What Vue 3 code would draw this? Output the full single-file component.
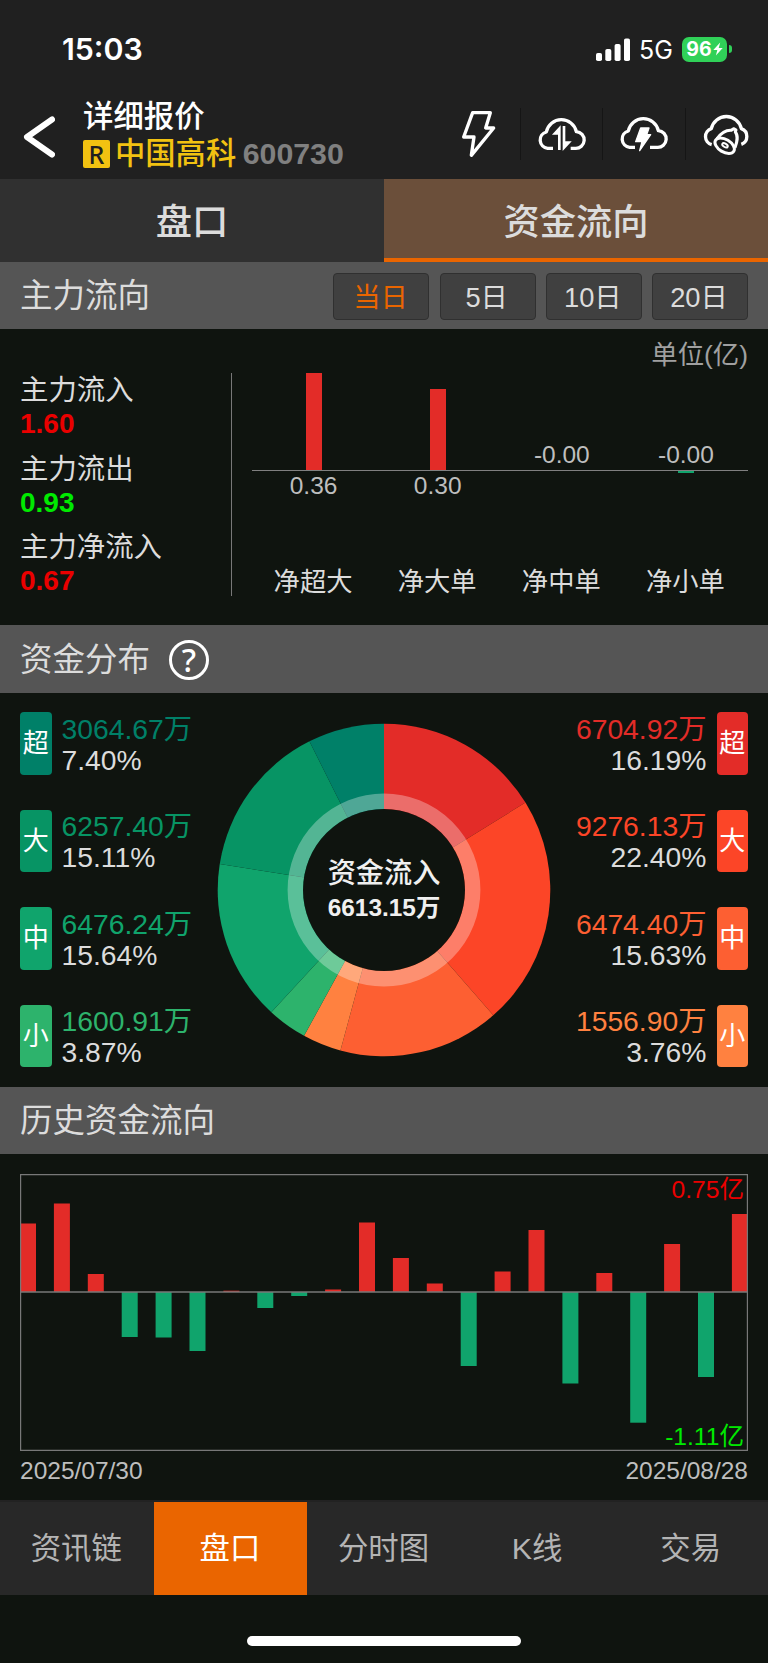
<!-- App.vue -->
<template>
  <div class="page">
    <div class="status-bar">
      <span class="clock">15:03</span>
      <div class="status-right">
        <svg class="signal" viewBox="0 0 34 23">
          <rect x="0" y="15" width="6" height="8" rx="1.8" />
          <rect x="9.3" y="11" width="6" height="12" rx="1.8" />
          <rect x="18.6" y="6" width="6" height="17" rx="1.8" />
          <rect x="28" y="0.5" width="6" height="22.5" rx="1.8" />
        </svg>
        <span class="network">5G</span>
        <div class="battery">
          <span>96</span>
          <svg class="charge" viewBox="0 0 10 14">
            <path d="M7.2 0.4 0.3 7.9H4.3L2.9 13.6 9.7 6H5.7Z" />
          </svg>
        </div>
        <span class="battery-cap"></span>
      </div>
    </div>

    <header class="header">
      <button class="back-btn">
        <svg viewBox="0 0 32 44">
          <path d="M29 4.5 4 22 29 39.5" />
        </svg>
      </button>
      <div class="stock">
        <div class="stock-title">详细报价</div>
        <div class="stock-line">
          <span class="stock-flag">R</span>
          <span class="stock-name">中国高科</span>
          <span class="stock-code">600730</span>
        </div>
      </div>
      <div class="actions">
        <button class="action">
          <svg viewBox="0 0 248 156">
            <path d="M104 14H157L143 60H167L100 142 108 87H77Z" />
          </svg>
        </button>
        <button class="action">
          <svg viewBox="0 0 248 156">
            <path d="M96 121H80A25 25 0 0 1 76 72A46 46 0 0 1 166 71A25 25 0 0 1 163 121H149" />
            <path class="thin" d="M115 126V62L102 76H114M129 54V119L143 104H131" />
          </svg>
        </button>
        <button class="action">
          <svg viewBox="0 0 248 156">
            <path d="M96 118H80A25 25 0 0 1 76 69A46 46 0 0 1 166 68A25 25 0 0 1 163 118H141" />
            <path class="solid" d="M113 60H138L131 80H143L110 128 117 101H98Z" />
          </svg>
        </button>
        <button class="action">
          <svg viewBox="0 0 248 156">
            <path d="M77 110A25 25 0 0 1 76 62A46 46 0 0 1 166 62A25 25 0 0 1 166 109" />
            <ellipse class="bell" cx="116" cy="113" rx="32" ry="19" transform="rotate(31 116 113)" />
            <path class="bell" d="M93 92C102 80 116 66 135 67L144 62 150 66 148 72C159 86 152 104 147 119" />
            <ellipse class="clapper" cx="117" cy="112" rx="9" ry="5" transform="rotate(31 117 112)" />
          </svg>
        </button>
      </div>
    </header>

    <div class="tabs">
      <button v-for="tab in tabs" :key="tab" class="tab" :class="{ active: tab === activeTab }"
        @click="activeTab = tab">{{ tab }}</button>
    </div>

    <div class="section-bar">
      <h3>主力流向</h3>
      <div class="periods">
        <button v-for="p in periods" :key="p" class="period" :class="{ active: p === activePeriod }"
          @click="activePeriod = p">{{ p }}</button>
      </div>
    </div>

    <section class="main-flow">
      <div class="totals">
        <div v-for="item in totals" :key="item.label" class="total">
          <div class="total-label">{{ item.label }}</div>
          <div class="total-value" :class="item.tone">{{ item.value }}</div>
        </div>
      </div>
      <div class="net">
        <div class="unit">单位(亿)</div>
        <div class="net-chart">
          <div v-for="item in netOrders" :key="item.label" class="net-col">
            <div class="net-top">
              <span v-if="item.height <= 0" class="net-value">{{ item.value }}</span>
              <i v-else class="net-bar" :style="{ height: item.height + 'px' }"></i>
            </div>
            <div class="net-bottom">
              <span v-if="item.height > 0" class="net-value">{{ item.value }}</span>
              <i v-else class="net-bar down" :style="{ height: -item.height + 'px' }"></i>
            </div>
            <div class="net-label">{{ item.label }}</div>
          </div>
        </div>
      </div>
    </section>

    <div class="section-bar">
      <h3>资金分布</h3>
      <span class="help">?</span>
    </div>

    <section class="distribution">
      <ul class="legend">
        <li v-for="item in outflow" :key="item.tag">
          <span class="tag" :style="{ background: item.color }">{{ item.tag }}</span>
          <div class="legend-text">
            <div :style="{ color: item.color }">{{ item.amount }}万</div>
            <div class="percent">{{ item.percent.toFixed(2) }}%</div>
          </div>
        </li>
      </ul>
      <svg class="donut" viewBox="-167 -167 334 334">
        <path v-for="s in slices" :key="s.d" :d="s.d" :fill="s.color" />
        <circle class="halo" r="88.7" />
        <circle class="hole" r="81" />
        <text class="donut-title" y="-7">资金流入</text>
        <text class="donut-value" y="26">6613.15万</text>
      </svg>
      <ul class="legend right">
        <li v-for="item in inflow" :key="item.tag">
          <span class="tag" :style="{ background: item.color }">{{ item.tag }}</span>
          <div class="legend-text">
            <div :style="{ color: item.color }">{{ item.amount }}万</div>
            <div class="percent">{{ item.percent.toFixed(2) }}%</div>
          </div>
        </li>
      </ul>
    </section>

    <div class="section-bar">
      <h3>历史资金流向</h3>
    </div>

    <section class="history">
      <svg class="history-chart" viewBox="0 0 728 277">
        <rect v-for="(h, i) in history" :key="i" :x="i * 33.9" :y="h > 0 ? 118 - h : 118" width="16"
          :height="Math.abs(h)" :fill="h > 0 ? '#e32c28' : '#10a46c'" />
        <path class="frame" d="M0.5 0.5H727.5V276.5H0.5ZM0 118H728" />
        <text class="max" x="724" y="24">0.75亿</text>
        <text class="min" x="724" y="271">-1.11亿</text>
      </svg>
      <div class="dates">
        <span>2025/07/30</span>
        <span>2025/08/28</span>
      </div>
    </section>

    <nav class="bottom-nav">
      <button v-for="item in navItems" :key="item" class="nav-item" :class="{ active: item === activeNav }"
        @click="activeNav = item">{{ item }}</button>
    </nav>
    <div class="home-area"><span class="home-indicator"></span></div>
  </div>
</template>

<script setup>
import { ref, computed } from 'vue'

const tabs = ['盘口', '资金流向']
const activeTab = ref('资金流向')

const periods = ['当日', '5日', '10日', '20日']
const activePeriod = ref('当日')

const navItems = ['资讯链', '盘口', '分时图', 'K线', '交易']
const activeNav = ref('盘口')

const totals = [
  { label: '主力流入', value: '1.60', tone: 'up' },
  { label: '主力流出', value: '0.93', tone: 'down' },
  { label: '主力净流入', value: '0.67', tone: 'up' },
]

const netOrders = [
  { label: '净超大', value: '0.36', height: 97 },
  { label: '净大单', value: '0.30', height: 81 },
  { label: '净中单', value: '-0.00', height: 0 },
  { label: '净小单', value: '-0.00', height: -1.5 },
]

const outflow = [
  { tag: '超', amount: '3064.67', percent: 7.4, color: '#008068' },
  { tag: '大', amount: '6257.40', percent: 15.11, color: '#079464' },
  { tag: '中', amount: '6476.24', percent: 15.64, color: '#10a46c' },
  { tag: '小', amount: '1600.91', percent: 3.87, color: '#2db36c' },
]

const inflow = [
  { tag: '超', amount: '6704.92', percent: 16.19, color: '#e32c28' },
  { tag: '大', amount: '9276.13', percent: 22.4, color: '#fc4527' },
  { tag: '中', amount: '6474.40', percent: 15.63, color: '#fd5f32' },
  { tag: '小', amount: '1556.90', percent: 3.76, color: '#ff8140' },
]

// 每日柱高（像素），正数在零轴上方
const history = [
  68.5, 88.5, 18, -45, -45.5, -59, 1.3, -16, -4, 2.5, 69.5,
  34, 8.5, -74, 20.5, 62, -91.5, 19, -130.7, 48, -85, 78,
]

// 从十二点方向顺时针：流入由大到小，再接流出
const slices = computed(() => {
  const all = [...inflow, ...[...outflow].reverse()]
  const total = all.reduce((sum, item) => sum + item.percent, 0)
  const radius = 166.3
  const point = (v) => {
    const a = (v / total) * Math.PI * 2
    return `${(Math.sin(a) * radius).toFixed(2)} ${(-Math.cos(a) * radius).toFixed(2)}`
  }
  let start = 0
  return all.map((item) => {
    const end = start + item.percent
    const d = `M0 0L${point(start)}A${radius} ${radius} 0 0 1 ${point(end)}Z`
    start = end
    return { d, color: item.color }
  })
})
</script>

<style>
body {
  margin: 0;
  background: #0f140f;
}
</style>

<style scoped>
.page {
  width: 768px;
  height: 1663px;
  display: flex;
  flex-direction: column;
  overflow: hidden;
  background: #0f140f;
  color: #dcdcdc;
  font-family: "Liberation Sans", "Noto Sans CJK SC", sans-serif;
}

button {
  padding: 0;
  border: 0;
  background: none;
  color: inherit;
  font: inherit;
  cursor: pointer;
}

h3 {
  margin: 0;
  font-weight: 400;
}

svg {
  display: block;
}

.status-bar {
  height: 98px;
  box-sizing: border-box;
  padding: 0 36.5px 0 62px;
  display: flex;
  justify-content: space-between;
  align-items: center;
  background: #202020;
  color: #fff;
  font-family: Inter, sans-serif;
}

.clock {
  font-size: 30.3px;
  font-weight: 600;
}

.status-right {
  display: flex;
  align-items: center;
}

.signal {
  width: 34px;
  height: 23px;
  fill: #fff;
}

.network {
  margin-left: 9.5px;
  width: 33px;
  font-size: 25px;
  line-height: 26px;
  padding-top: 2px;
}

.battery {
  margin-left: 10px;
  width: 45px;
  height: 25px;
  border-radius: 7px;
  display: flex;
  align-items: center;
  justify-content: center;
  background: #30d158;
  font-size: 19.5px;
  font-weight: 700;
}

.charge {
  width: 10px;
  height: 14px;
  flex: none;
  margin-left: 1px;
  fill: #fff;
}

.battery-cap {
  width: 2.5px;
  height: 8px;
  margin-left: 2px;
  border-radius: 0 3px 3px 0;
  background: #30d158;
}

.header {
  height: 81px;
  display: flex;
  background: #202020;
}

.back-btn {
  width: 83px;
  padding: 0 0 4px 23px;
  box-sizing: border-box;
}

.back-btn svg {
  width: 32px;
  height: 44px;
  fill: none;
  stroke: #fff;
  stroke-width: 6;
  stroke-linecap: round;
  stroke-linejoin: round;
}

.stock {
  flex: 1;
}

.stock-title {
  height: 37px;
  line-height: 37px;
  font-size: 30.4px;
  font-weight: 500;
  color: #fff;
}

.stock-line {
  height: 37px;
  display: flex;
  align-items: center;
  line-height: 37px;
  font-size: 30.3px;
}

.stock-flag {
  width: 27px;
  height: 28px;
  margin-right: 5px;
  border-radius: 2px;
  background: #f2c211;
  color: #202020;
  font-family: "Noto Sans", sans-serif;
  font-size: 25px;
  font-weight: 500;
  line-height: 28px;
  text-align: center;
}

.stock-name {
  font-weight: 500;
  color: #f2c211;
}

.stock-code {
  margin-left: 6.5px;
  font-weight: 700;
  color: #808080;
}

.actions {
  width: 330px;
  height: 52px;
  margin-top: 10px;
  display: flex;
}

.action {
  flex: 1;
}

.action + .action {
  box-shadow: -1px 0 0 #151515;
}

.action svg {
  width: 82.67px;
  height: 52px;
  fill: none;
  stroke: #fff;
  stroke-width: 10;
  stroke-linejoin: round;
}

.action .thin {
  stroke-width: 8;
  stroke-linejoin: miter;
}

.action .solid {
  fill: #fff;
  stroke-width: 4;
}

.action .bell {
  stroke-width: 9;
}

.action .clapper {
  stroke-width: 6;
}

.tabs {
  height: 83px;
  display: flex;
}

.tab {
  flex: 1;
  box-sizing: border-box;
  background: #303030;
  border-bottom: 4px solid #303030;
  font-size: 36.3px;
  font-weight: 500;
}

.tab.active {
  background: #6b4f3a;
  border-bottom-color: #ea6500;
}

.section-bar {
  height: 67.3px;
  flex: none;
  box-sizing: border-box;
  padding: 1px 20px 0;
  display: flex;
  align-items: center;
  background: #555;
}

.section-bar h3 {
  font-size: 32.5px;
  line-height: 40px;
}

.periods {
  margin-left: auto;
  display: flex;
  gap: 10.2px;
}

.period {
  width: 96px;
  height: 47px;
  box-sizing: border-box;
  padding: 0 2px 3px 0;
  border: 1px solid #303030;
  border-radius: 4px;
  background: #404040;
  font-size: 27.3px;
}

.period.active {
  color: #ea6500;
}

.main-flow {
  height: 296.2px;
  box-sizing: border-box;
  padding: 0 20px;
  display: flex;
}

.totals {
  width: 212px;
  height: 223px;
  margin-top: 44px;
  box-sizing: border-box;
  border-right: 1.5px solid #787878;
}

.total {
  height: 78.5px;
}

.total-label,
.total-value {
  height: 34px;
  font-size: 28.4px;
  line-height: 34px;
}

.total-value {
  font-size: 28px;
  font-weight: 700;
}

.up {
  color: #ea0000;
}

.down {
  color: #00ea00;
}

.net {
  flex: 1;
  margin-left: 19.5px;
}

.unit {
  height: 44px;
  line-height: 52px;
  font-size: 26.4px;
  text-align: right;
  color: #a0a0a0;
}

.net-chart {
  display: flex;
}

.net-col {
  flex: 1;
}

.net-top {
  height: 97px;
  display: flex;
  justify-content: center;
  align-items: flex-end;
  border-bottom: 1px solid #808080;
}

.net-bottom {
  height: 92.5px;
  display: flex;
  justify-content: center;
  align-items: flex-start;
}

.net-value {
  font-size: 24.5px;
  line-height: 30px;
  color: #bebebe;
}

.net-bar {
  width: 16px;
  background: #e32c28;
}

.net-bar.down {
  background: #10a46c;
}

.net-label {
  margin-left: -1px;
  font-size: 26.3px;
  line-height: 36px;
  text-align: center;
}

.help {
  width: 40px;
  height: 40px;
  margin-left: 19px;
  box-sizing: border-box;
  border: 3.5px solid #fff;
  border-radius: 50%;
  color: #fff;
  font-family: "Noto Sans", sans-serif;
  font-size: 32px;
  font-weight: 500;
  line-height: 33px;
  text-align: center;
}

.distribution {
  height: 394.4px;
  box-sizing: border-box;
  padding: 19.5px 20px 0;
  display: flex;
  justify-content: space-between;
}

.legend {
  width: 180px;
  margin: 0;
  padding: 0;
  list-style: none;
}

.legend li {
  height: 62.7px;
  margin-bottom: 34.8px;
  display: flex;
  gap: 10px;
}

.legend.right li {
  flex-direction: row-reverse;
  text-align: right;
}

.tag {
  width: 31.5px;
  border-radius: 4px;
  color: #fff;
  font-size: 26px;
  line-height: 63px;
  text-align: center;
}

.legend-text {
  padding-top: 1.3px;
  font-size: 28.3px;
  line-height: 31px;
  white-space: nowrap;
}

.percent {
  color: #dcdcdc;
}

.donut {
  width: 334px;
  height: 334px;
  margin-top: 11px;
}

.halo {
  fill: none;
  stroke: #fff;
  stroke-opacity: 0.31;
  stroke-width: 15.4;
}

.hole {
  fill: #0f140f;
}

.donut text {
  fill: #f0f0f0;
  text-anchor: middle;
}

.donut-title {
  font-size: 28.2px;
  font-weight: 500;
}

.donut-value {
  font-size: 24.4px;
  font-weight: 700;
}

.history {
  height: 345.5px;
  box-sizing: border-box;
  padding: 19.5px 20px 0;
}

.history-chart {
  width: 728px;
  height: 277px;
}

.frame {
  fill: none;
  stroke: #787878;
  stroke-width: 1.4;
}

.history-chart text {
  font-size: 24.6px;
  text-anchor: end;
}

.max {
  fill: #ea0000;
}

.min {
  fill: #00ea00;
}

.dates {
  display: flex;
  justify-content: space-between;
  font-size: 24.5px;
  line-height: 40px;
  color: #bebebe;
}

.bottom-nav {
  height: 95px;
  box-sizing: border-box;
  border-top: 2px solid #222;
  display: flex;
  background: #282828;
  color: #b4b4b4;
}

.nav-item {
  flex: 1;
  padding: 0 1px 5px 0;
  font-size: 30.4px;
}

.nav-item.active {
  background: #ea6500;
  color: #fff;
}

.home-area {
  flex: 1;
  display: flex;
  justify-content: center;
}

.home-indicator {
  width: 274px;
  height: 10px;
  margin-top: 41px;
  border-radius: 5px;
  background: #fff;
}
</style>
